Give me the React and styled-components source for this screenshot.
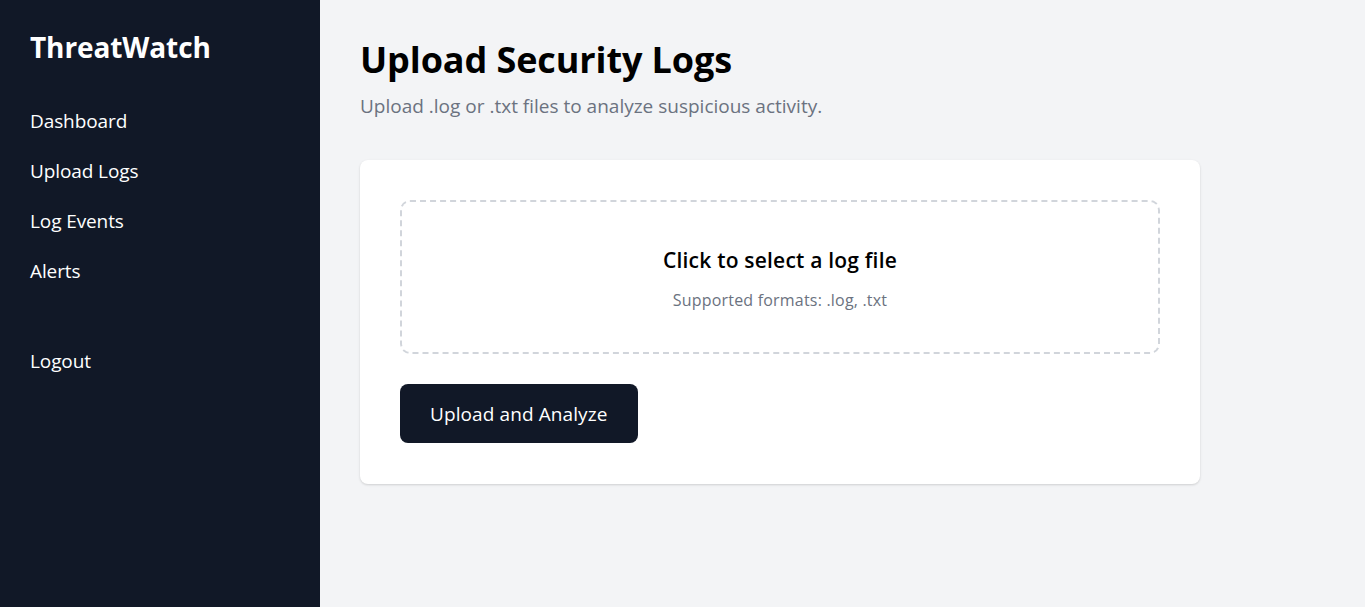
import React from "react";
import styled, { createGlobalStyle } from "styled-components";

const Global = createGlobalStyle`
  html, body { margin: 0; padding: 0; }
  body { font-family: "Open Sans", "Noto Sans", sans-serif; background: #f3f4f6; }
  * { box-sizing: border-box; }
`;

const Layout = styled.div`
  display: flex;
  min-height: 607px;
`;

const Sidebar = styled.aside`
  width: 320px;
  flex-shrink: 0;
  background: #111827;
  color: #ffffff;
  padding: 28px 30px;
  display: flex;
  flex-direction: column;
`;

const Brand = styled.h2`
  margin: 0 0 41px;
  font-size: 28px;
  font-weight: 700;
  line-height: 38px;
  letter-spacing: -0.1px;
`;

const Nav = styled.nav`
  display: flex;
  flex-direction: column;
  gap: 22px;
`;

const NavLink = styled.a`
  color: #ffffff;
  text-decoration: none;
  font-size: 19px;
  line-height: 28px;
  letter-spacing: -0.1px;
  margin-top: ${(p) => (p.$spaced ? "40px" : "0")};
  cursor: pointer;
`;

const Main = styled.main`
  flex: 1;
  padding: 37px 40px;
`;

const Title = styled.h1`
  margin: 0;
  font-size: 36px;
  font-weight: 700;
  line-height: 46px;
  letter-spacing: -0.1px;
  color: #000;
`;

const Subtitle = styled.p`
  margin: 10px 0 0;
  font-size: 19px;
  line-height: 26px;
  color: #6b7280;
`;

const Card = styled.section`
  margin-top: 41px;
  width: 840px;
  background: #ffffff;
  border-radius: 8px;
  box-shadow: 0 1px 3px rgba(0, 0, 0, 0.1), 0 1px 2px rgba(0, 0, 0, 0.06);
  padding: 40px 40px 41px;
`;

const DropZone = styled.label`
  display: flex;
  flex-direction: column;
  align-items: center;
  border: 2px dashed #d1d5db;
  border-radius: 10px;
  padding: 44px 20px 41px;
  cursor: pointer;
`;

const DropTitle = styled.span`
  font-size: 21px;
  font-weight: 600;
  line-height: 28px;
  color: #000;
  letter-spacing: 0.2px;
`;

const DropHint = styled.span`
  margin-top: 15px;
  font-size: 16px;
  line-height: 22px;
  color: #6b7280;
  letter-spacing: 0.2px;
`;

const Button = styled.button`
  margin-top: 30px;
  background: #111827;
  color: #ffffff;
  border: none;
  border-radius: 8px;
  height: 59px;
  padding: 0 30px;
  font-family: inherit;
  font-size: 19px;
  letter-spacing: 0.1px;
  cursor: pointer;
`;

export default function App() {
  return (
    <>
      <Global />
      <Layout>
        <Sidebar>
          <Brand>ThreatWatch</Brand>
          <Nav>
            <NavLink>Dashboard</NavLink>
            <NavLink>Upload Logs</NavLink>
            <NavLink>Log Events</NavLink>
            <NavLink>Alerts</NavLink>
            <NavLink $spaced>Logout</NavLink>
          </Nav>
        </Sidebar>
        <Main>
          <Title>Upload Security Logs</Title>
          <Subtitle>Upload .log or .txt files to analyze suspicious activity.</Subtitle>
          <Card>
            <DropZone>
              <DropTitle>Click to select a log file</DropTitle>
              <DropHint>Supported formats: .log, .txt</DropHint>
            </DropZone>
            <Button>Upload and Analyze</Button>
          </Card>
        </Main>
      </Layout>
    </>
  );
}
